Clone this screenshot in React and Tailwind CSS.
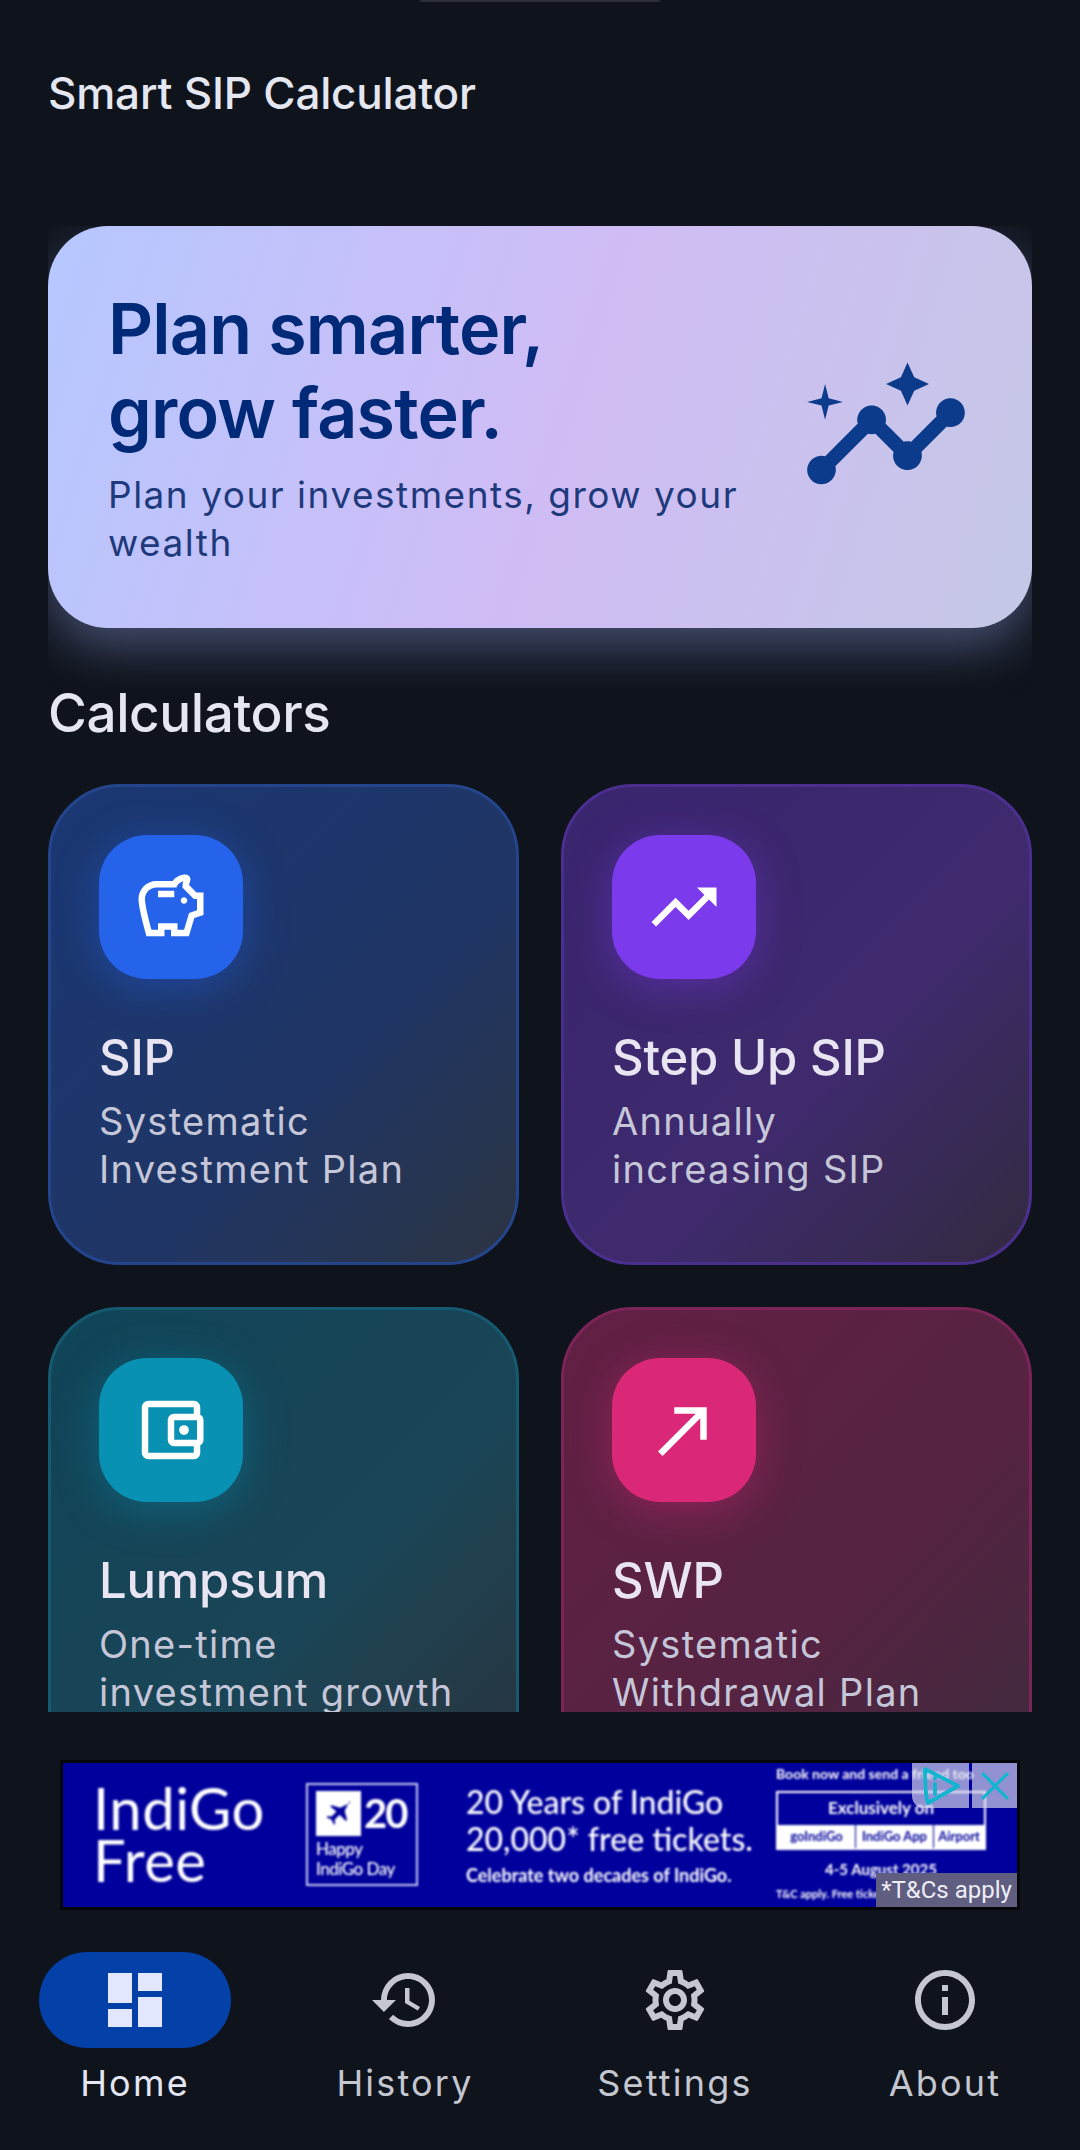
import React from "react";
import {
  MdInsights, MdOutlineSavings, MdTrendingUp, MdOutlineAccountBalanceWallet, MdCallMade,
  MdDashboard, MdHistory, MdOutlineSettings, MdInfoOutline,
} from "react-icons/md";

function Card({ Icon, iconSize, title, lines, cardCls, iconCls }) {
  return (
    <div className={`h-[481px] rounded-[72px] border-[3px] p-[48px] ${cardCls}`}>
      <div className={`flex h-[144px] w-[144px] items-center justify-center rounded-[48px] text-white ${iconCls}`}>
        <Icon size={iconSize} />
      </div>
      <div className="mt-[50px] text-[49px] font-medium leading-[58px] tracking-[-0.2px] text-[#e8e4f2]">{title}</div>
      <div className="mt-[10px] text-[38px] leading-[48px] tracking-[1.3px] text-[#c5c6d8]">
        {lines.map((l) => (
          <div key={l} className="whitespace-nowrap">{l}</div>
        ))}
      </div>
    </div>
  );
}

function NavItem({ Icon, label, active }) {
  return (
    <div className="flex flex-col items-center">
      <div className={`flex h-[96px] w-[192px] items-center justify-center rounded-[48px] ${active ? "bg-[#0340a8] text-[#e2e6ff]" : "text-[#c4c6d0]"}`}>
        <Icon size={72} />
      </div>
      <div className={`mt-[11px] text-[36px] leading-[48px] tracking-[2.2px] ${active ? "text-[#e4e6f4]" : "text-[#c4c6d0]"}`}>{label}</div>
    </div>
  );
}

function Ad() {
  return (
    <div className="relative mx-[60px] mt-[48px] h-[150px] border-[3px] border-[#05060a] bg-[#00009c] font-[Lato] text-white">
      <div className="flex h-full items-start blur-[0.8px]">
        <div className="ml-[30px] mt-[19px] w-[213px] text-[58px] leading-[52px] tracking-[0.5px]">
          <div>IndiGo</div>
          <div>Free</div>
        </div>
        <div className="mt-[20px] h-[103px] w-[112px] border-[2px] border-[#c9c9f2] px-[8px] pt-[6px]">
          <div className="flex items-start gap-[3px]">
            <div className="flex h-[45px] w-[45px] items-center justify-center bg-white text-[#00009c]">
              <svg viewBox="0 0 24 24" width="30" height="30" fill="currentColor"><path d="M21 3 13 7 6 5 5 6l5 4-4 4-3-.5-1 1 4 2 2 4 1-1-.5-3 4-4 5 5 1-1-2-7 4-8z" /></svg>
            </div>
            <div className="text-[40px] font-bold leading-[44px] tracking-[-2px]">20</div>
          </div>
          <div className="mt-[3px] text-[17px] font-medium leading-[20px] tracking-[-0.5px]">
            <div>Happy</div>
            <div className="whitespace-nowrap">IndiGo Day</div>
          </div>
        </div>
        <div className="ml-[48px] mt-[20px] w-[310px]">
          <div className="whitespace-nowrap text-[32px] font-medium leading-[37px]">20 Years of IndiGo</div>
          <div className="whitespace-nowrap text-[32px] font-medium leading-[37px]">20,000* free tickets.</div>
          <div className="mt-[7px] whitespace-nowrap text-[18px] font-bold leading-[22px]">Celebrate two decades of IndiGo.</div>
        </div>
        <div className="mt-[2px] w-[210px] text-center">
          <div className="whitespace-nowrap text-left text-[14px] font-bold leading-[18px]">Book now and send a friend too</div>
          <div className="mt-[8px] border-[2px] border-white">
            <div className="h-[32px] text-[17px] font-bold leading-[30px]">Exclusively on</div>
            <div className="flex h-[23px] bg-white text-[13px] font-bold leading-[23px] text-[#00009c]">
              <div className="w-[78px] border-r border-[#00009c]">goIndiGo</div>
              <div className="w-[78px] border-r border-[#00009c]">IndiGo App</div>
              <div className="flex-1">Airport</div>
            </div>
          </div>
          <div className="mt-[9px] text-[15px] font-bold leading-[20px]">4-5 August 2025</div>
          <div className="mt-[8px] whitespace-nowrap text-left text-[11px] font-bold leading-[14px]">T&amp;C apply. Free tickets subject to availability</div>
        </div>
      </div>
      <div className="absolute right-0 top-0 flex gap-[3px]">
        <div className="flex h-[45px] w-[57px] items-center justify-center rounded-bl-[12px] bg-[#e0e0f0]/65">
          <svg viewBox="0 0 40 38" width="40" height="38" fill="none" stroke="#12b5cf" strokeWidth="3.8" strokeLinecap="round" strokeLinejoin="round"><path d="M4 2 37 19 7 36C4 28 4 12 4 2z" /><path d="M14 17v10M14 11v.5" /></svg>
        </div>
        <div className="flex h-[45px] w-[45px] items-center justify-center bg-[#e0e0f0]/65">
          <svg viewBox="0 0 30 30" width="32" height="32" stroke="#12b5cf" strokeWidth="3"><path d="M3 3l24 24M27 3 3 27" /></svg>
        </div>
      </div>
      <div className="absolute bottom-0 right-0 flex h-[34px] w-[141px] items-center justify-center whitespace-nowrap bg-[#5f5d80] font-[Roboto] text-[24px] text-[#eeeef6]">*T&amp;Cs apply</div>
    </div>
  );
}

export default function App() {
  return (
    <div className="flex h-[2150px] w-[1080px] flex-col overflow-hidden bg-[#0f131c] font-[Inter]">
      <div className="mx-auto h-[2px] w-[240px] shrink-0 rounded-b-[4px] bg-[#2c3036]" />
      <div className="shrink-0 px-[48px] pt-[62px] text-[44px] font-medium leading-[58px] tracking-[-0.2px] text-[#e4e6f0]">Smart SIP Calculator</div>
      <div className="mt-[104px] h-[1486px] shrink-0 overflow-hidden px-[48px]">
        <div className="overflow-hidden pb-[72px]">
          <div className="flex h-[402px] items-center justify-between rounded-[60px] bg-[linear-gradient(108deg,#b6c7ff_0%,#d0bcf5_52%,#c4c8e6_100%)] pl-[60px] pr-[60px] shadow-[0_20px_48px_rgba(120,135,190,0.5)]">
            <div className="mt-[4px]">
              <div className="-mt-[4px] text-[70px] font-semibold leading-[84px] tracking-[-0.8px] text-[#002a78]">
                Plan smarter,<br />grow faster.
              </div>
              <div className="mt-[16px] w-[680px] text-[37px] leading-[48px] tracking-[1.5px] text-[#1f3a7c]">Plan your investments, grow your wealth</div>
            </div>
            <MdInsights size={172} className="shrink-0 text-[#0c3b8c]" />
          </div>
        </div>
        <div className="-mt-[15px] text-[53px] font-medium leading-[56px] tracking-[-0.4px] text-[#e4e6f0]">Calculators</div>
        <div className="mt-[43px] grid grid-cols-2 gap-x-[42px] gap-y-[42px]">
          <Card Icon={MdOutlineSavings} iconSize={78} title="SIP" lines={["Systematic", "Investment Plan"]}
            cardCls="border-[#24458c] bg-gradient-to-br from-[#1b3875] via-[#1f3564] via-60% to-[#2d3442]"
            iconCls="bg-[#2563eb] shadow-[0_8px_44px_rgba(37,99,235,0.4)]" />
          <Card Icon={MdTrendingUp} iconSize={78} title="Step Up SIP" lines={["Annually", "increasing SIP"]}
            cardCls="border-[#4a2f8f] bg-gradient-to-br from-[#3a2570] via-[#3e2a6c] via-60% to-[#33293f]"
            iconCls="bg-[#7c3aed] shadow-[0_8px_44px_rgba(124,58,237,0.4)]" />
          <Card Icon={MdOutlineAccountBalanceWallet} iconSize={78} title="Lumpsum" lines={["One-time", "investment growth"]}
            cardCls="border-[#155a70] bg-gradient-to-br from-[#0f4458] via-[#1a4556] via-60% to-[#28343f]"
            iconCls="bg-[#0891b2] shadow-[0_8px_44px_rgba(8,145,178,0.4)]" />
          <Card Icon={MdCallMade} iconSize={78} title="SWP" lines={["Systematic", "Withdrawal Plan"]}
            cardCls="border-[#7a2457] bg-gradient-to-br from-[#621f44] via-[#562342] via-60% to-[#3e2a3e]"
            iconCls="bg-[#db2777] shadow-[0_8px_44px_rgba(219,39,119,0.4)]" />
        </div>
      </div>
      <Ad />
      <div className="mt-[42px] grid grid-cols-4">
        <NavItem Icon={MdDashboard} label="Home" active />
        <NavItem Icon={MdHistory} label="History" />
        <NavItem Icon={MdOutlineSettings} label="Settings" />
        <NavItem Icon={MdInfoOutline} label="About" />
      </div>
    </div>
  );
}
